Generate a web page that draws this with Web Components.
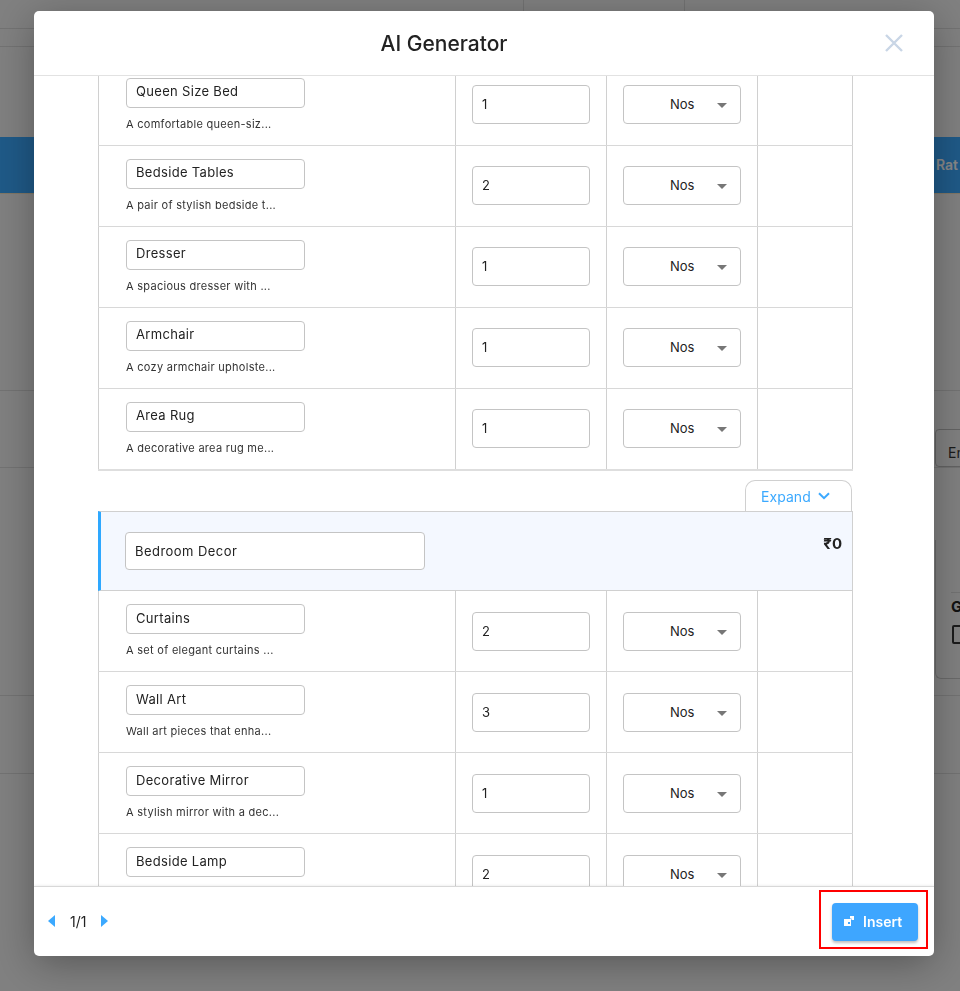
<!DOCTYPE html>
<html lang="en">
<head>
<meta charset="utf-8">
<title>AI Generator</title>
<style>
	html, body { margin: 0; height: 100%; overflow: hidden; }
	body { font-family: Inter, "Liberation Sans", sans-serif; color: #222; background: #f2f2f2; }
</style>
</head>
<body>
<page-behind></page-behind>
<modal-overlay>
	<span slot="title">AI Generator</span>
	<item-row qty="1"><span slot="name">Queen Size Bed</span><span slot="desc">A comfortable queen-siz...</span></item-row>
	<item-row qty="2"><span slot="name">Bedside Tables</span><span slot="desc">A pair of stylish bedside t...</span></item-row>
	<item-row qty="1"><span slot="name">Dresser</span><span slot="desc">A spacious dresser with ...</span></item-row>
	<item-row qty="1"><span slot="name">Armchair</span><span slot="desc">A cozy armchair upholste...</span></item-row>
	<item-row qty="1" last><span slot="name">Area Rug</span><span slot="desc">A decorative area rug me...</span></item-row>
	<section-head price="₹0">Bedroom Decor</section-head>
	<item-row qty="2" lower><span slot="name">Curtains</span><span slot="desc">A set of elegant curtains ...</span></item-row>
	<item-row qty="3" lower><span slot="name">Wall Art</span><span slot="desc">Wall art pieces that enha...</span></item-row>
	<item-row qty="1" lower><span slot="name">Decorative Mirror</span><span slot="desc">A stylish mirror with a dec...</span></item-row>
	<item-row qty="2" lower><span slot="name">Bedside Lamp</span></item-row>
	<page-nav slot="footer" current="1/1"></page-nav>
	<insert-button slot="footer">Insert</insert-button>
</modal-overlay>

<script>
class PageBehind extends HTMLElement {
	constructor() {
		super();
		this.attachShadow({ mode: 'open' });
	}

	connectedCallback() {
		this.shadowRoot.innerHTML = /* html */ `
      <style>
        :host { display: block; height: 991px; overflow: hidden; }
        .line { border-bottom: 1px solid #d8d8d8; }
        .top { display: flex; height: 28px; }
        .top div { border-right: 1px solid #d8d8d8; }
        .sub { height: 17px; }
        .bar {
          height: 57px;
          margin-top: 90px;
          box-sizing: border-box;
          padding-left: 936px;
          background: #3ba9ff;
          border-bottom: 1px solid #f2e0c0;
          color: #fff;
          font-size: 14px;
          font-weight: 600;
          line-height: 56px;
          white-space: nowrap;
          overflow: hidden;
        }
        .gap1 { height: 196px; }
        .gap2 { height: 76px; display: flex; align-items: flex-end; padding-left: 935px; overflow: hidden; }
        .enter {
          flex: none;
          width: 60px;
          height: 38px;
          box-sizing: border-box;
          border: 1px solid #bbb;
          border-radius: 4px;
          padding: 14px 12px 0;
          font-size: 14px;
          color: #333;
          white-space: nowrap;
        }
        .gap3 { height: 228px; box-sizing: border-box; padding: 72px 0 0 935px; overflow: hidden; }
        .card {
          width: 60px;
          height: 139px;
          box-sizing: border-box;
          border: 1px solid #c8c8c8;
          border-right: 0;
          border-top: 0;
          border-radius: 0 0 0 6px;
          padding: 52px 0 0 15px;
        }
        .card hr { margin: 0 0 6px; border: 0; border-top: 1px solid #d8d8d8; }
        .card b { display: block; font-size: 15px; line-height: 16px; color: #222; }
        .card i { display: block; width: 15px; height: 15px; margin: 10px 0 0 1px; border: 2px solid #333; border-radius: 2px; }
        .gap4 { height: 77px; }
      </style>
      <div class="top line"><div style="width:523px"></div><div style="width:160px"></div></div>
      <div class="sub line"></div>
      <div class="bar">Rat</div>
      <div class="gap1 line"></div>
      <div class="gap2 line"><div class="enter">En</div></div>
      <div class="gap3 line"><div class="card"><hr><b>G</b><i></i></div></div>
      <div class="gap4 line"></div>
    `;
	}
}

class ModalOverlay extends HTMLElement {
	constructor() {
		super();
		this.attachShadow({ mode: 'open' });
	}

	connectedCallback() {
		this.shadowRoot.innerHTML = /* html */ `
      <style>
        :host {
          position: fixed;
          inset: 0;
          display: block;
          background: rgba(0, 0, 0, .47);
        }
        .modal {
          display: flex;
          flex-direction: column;
          width: 900px;
          height: 945px;
          margin: 11px 0 0 34px;
          background: #fff;
          border-radius: 5px;
          box-shadow: 0 8px 40px rgba(0, 0, 0, .32);
          overflow: hidden;
        }
        header {
          flex: none;
          display: flex;
          align-items: center;
          height: 64px;
          border-bottom: 1px solid #e2e2e2;
        }
        h1 {
          flex: 1;
          margin: 0;
          text-align: center;
          font-size: 21px;
          font-weight: 500;
          color: #222;
        }
        .close { width: 80px; display: flex; justify-content: center; }
        main { flex: 1; min-height: 0; overflow: hidden; }
        .sheet {
          width: 755px;
          margin: -11px 0 0 64px;
        }
        footer {
          flex: none;
          display: flex;
          align-items: flex-start;
          justify-content: space-between;
          box-sizing: border-box;
          height: 70px;
          padding: 3px 6px 0 14px;
          border-top: 1px solid #d8d8d8;
          box-shadow: 0 -1px 2px rgba(0, 0, 0, .06);
        }
      </style>
      <div class="modal">
        <header>
          <h1><slot name="title"></slot></h1>
          <div class="close">
            <svg width="20" height="20" viewBox="0 0 20 20"><path d="M2 2l16 16M18 2L2 18" fill="none" stroke="#c9d6e6" stroke-width="2.4"/></svg>
          </div>
        </header>
        <main><div class="sheet"><slot></slot></div></main>
        <footer><slot name="footer"></slot></footer>
      </div>
    `;
	}
}

class ItemRow extends HTMLElement {
	constructor() {
		super();
		this.attachShadow({ mode: 'open' });
	}

	connectedCallback() {
		this.shadowRoot.innerHTML = /* html */ `
      <style>
        :host {
          display: grid;
          grid-template-columns: 358px 151px 151px 95px;
          height: 81px;
          box-sizing: border-box;
          border-bottom: 1px solid #d8d8d8;
          font-size: 13px;
          color: #222;
        }
        :host([last]) { height: 82px; border-bottom: 2px solid #dedede; }
        :host([lower]) .num { padding-top: 21px; }
        :host([lower]) .name { line-height: 26px; }
        .cell {
          box-sizing: border-box;
          border-right: 1px solid #d0d0d0;
        }
        .main { border-left: 1px solid #d0d0d0; padding: 13px 0 0 27px; }
        .num { padding: 20px 16px 0; }
        .box {
          box-sizing: border-box;
          border: 1px solid #c4c4c4;
          border-radius: 4px;
          background: #fff;
        }
        .name {
          width: 179px;
          height: 30px;
          padding: 0 9px;
          line-height: 24px;
          letter-spacing: .32px;
          white-space: nowrap;
        }
        .desc {
          margin-top: 8px;
          font-size: 11px;
          line-height: 16px;
          letter-spacing: .28px;
          color: #333;
          white-space: nowrap;
        }
        .qty {
          height: 39px;
          padding: 0 9px;
          line-height: 37px;
        }
        .unit {
          position: relative;
          display: flex;
          height: 39px;
          padding-left: 46px;
          line-height: 36px;
        }
        .unit svg { position: absolute; left: 93px; top: 17px; }
      </style>
      <div class="cell main">
        <div class="box name"><slot name="name"></slot></div>
        <div class="desc"><slot name="desc"></slot></div>
      </div>
      <div class="cell num"><div class="box qty">${this.getAttribute('qty')}</div></div>
      <div class="cell num">
        <div class="box unit">Nos<svg width="10" height="5" viewBox="0 0 10 5"><path d="M0 0h10L5 5z" fill="#777"/></svg></div>
      </div>
      <div class="cell"></div>
    `;
	}
}

class SectionHead extends HTMLElement {
	constructor() {
		super();
		this.attachShadow({ mode: 'open' });
	}

	connectedCallback() {
		this.shadowRoot.innerHTML = /* html */ `
      <style>
        :host { display: block; margin-top: 9px; font-size: 14px; color: #222; }
        .tab-line { display: flex; justify-content: flex-end; padding-right: 1px; }
        .tab {
          display: flex;
          align-items: center;
          gap: 7px;
          box-sizing: border-box;
          width: 107px;
          height: 31px;
          padding-left: 15px;
          border: 1px solid #d0d0d0;
          border-bottom: 0;
          border-radius: 10px 10px 0 0;
          color: #3ba9ff;
          font-size: 14px;
          letter-spacing: .05px;
        }
        .head {
          display: flex;
          justify-content: space-between;
          box-sizing: border-box;
          height: 80px;
          padding: 20px 10px 0 24px;
          border: 1px solid #d0d0d0;
          border-left: 3px solid #2ea8ff;
          background: #f4f8ff;
        }
        .title {
          box-sizing: border-box;
          width: 300px;
          height: 38px;
          padding: 0 9px;
          line-height: 36px;
          letter-spacing: .45px;
          background: #fff;
          border: 1px solid #c4c4c4;
          border-radius: 4px;
          font-size: 13px;
        }
        .price { font-size: 15px; font-weight: 700; line-height: 24px; color: #222; }
      </style>
      <div class="tab-line">
        <div class="tab">Expand
          <svg width="12" height="8" viewBox="0 0 12 8"><path d="M1 1.2l5 5 5-5" fill="none" stroke="#3ba9ff" stroke-width="2"/></svg>
        </div>
      </div>
      <div class="head">
        <div class="title"><slot></slot></div>
        <div class="price">${this.getAttribute('price')}</div>
      </div>
    `;
	}
}

class PageNav extends HTMLElement {
	constructor() {
		super();
		this.attachShadow({ mode: 'open' });
	}

	connectedCallback() {
		this.shadowRoot.innerHTML = /* html */ `
      <style>
        :host {
          display: flex;
          align-items: center;
          gap: 15px;
          height: 62px;
          font-size: 14px;
          color: #222;
        }
      </style>
      <svg width="7" height="12" viewBox="0 0 7 12"><path d="M7 0v12L0 6z" fill="#3ba9ff"/></svg>
      <span>${this.getAttribute('current')}</span>
      <svg width="7" height="12" viewBox="0 0 7 12"><path d="M0 0v12l7-6z" fill="#3ba9ff"/></svg>
    `;
	}
}

class InsertButton extends HTMLElement {
	constructor() {
		super();
		this.attachShadow({ mode: 'open' });
	}

	connectedCallback() {
		this.shadowRoot.innerHTML = /* html */ `
      <style>
        :host {
          display: block;
          box-sizing: border-box;
          width: 109px;
          height: 59px;
          padding: 11px 8px 0 11px;
          border: 2px solid #f00;
        }
        button {
          display: flex;
          align-items: center;
          gap: 9px;
          width: 86px;
          height: 38px;
          padding: 0 0 2px 12px;
          border: 0;
          border-radius: 4px;
          background: #3ea6ff;
          box-shadow: 0 2px 3px rgba(0, 0, 0, .25);
          color: #fff;
          font: 600 14px Inter, "Liberation Sans", sans-serif;
        }
      </style>
      <button>
        <svg width="10" height="10" viewBox="0 0 10 10" fill="#fff"><path d="M0 3h7v7H0zM4 6v2h2V6z" fill-rule="evenodd"/><path d="M6 0h4v4H7.5V2.5H6z"/></svg>
        <slot></slot>
      </button>
    `;
	}
}

customElements.define('page-behind', PageBehind);
customElements.define('modal-overlay', ModalOverlay);
customElements.define('item-row', ItemRow);
customElements.define('section-head', SectionHead);
customElements.define('page-nav', PageNav);
customElements.define('insert-button', InsertButton);
</script>
</body>
</html>
